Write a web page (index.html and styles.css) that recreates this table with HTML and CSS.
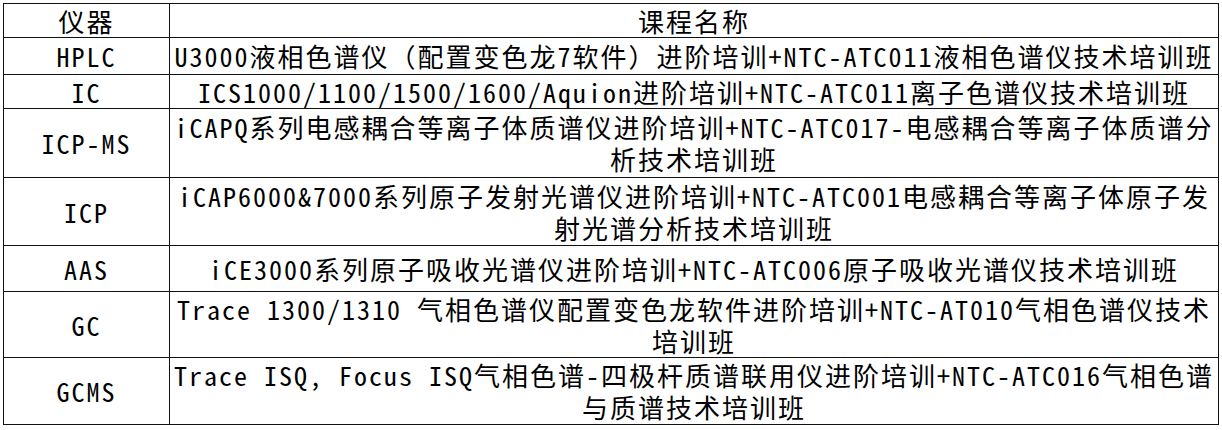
FILE: index.html
```html
<!DOCTYPE html>
<html lang="zh">
<head>
<meta charset="utf-8">
<title>课程表</title>
<link rel="stylesheet" href="styles.css">
</head>
<body>
<table class="course-table">
  <colgroup>
    <col class="col-inst">
    <col class="col-name">
  </colgroup>
  <tr class="r-head">
    <td class="inst">仪器</td>
    <td class="name">课程名称</td>
  </tr>
  <tr class="r-hplc">
    <td class="inst">HPLC</td>
    <td class="name">U3000液相色谱仪（配置变色龙7软件）进阶培训+NTC-ATC011液相色谱仪技术培训班</td>
  </tr>
  <tr class="r-ic">
    <td class="inst">IC</td>
    <td class="name">ICS1000/1100/1500/1600/Aquion进阶培训+NTC-ATC011离子色谱仪技术培训班</td>
  </tr>
  <tr class="r-icpms">
    <td class="inst">ICP-MS</td>
    <td class="name">iCAPQ系列电感耦合等离子体质谱仪进阶培训+NTC-ATC017-电感耦合等离子体质谱分<br>析技术培训班</td>
  </tr>
  <tr class="r-icp">
    <td class="inst">ICP</td>
    <td class="name">iCAP6000&amp;7000系列原子发射光谱仪进阶培训+NTC-ATC001电感耦合等离子体原子发<br>射光谱分析技术培训班</td>
  </tr>
  <tr class="r-aas">
    <td class="inst">AAS</td>
    <td class="name">iCE3000系列原子吸收光谱仪进阶培训+NTC-ATC006原子吸收光谱仪技术培训班</td>
  </tr>
  <tr class="r-gc">
    <td class="inst">GC</td>
    <td class="name">Trace 1300/1310 气相色谱仪配置变色龙软件进阶培训+NTC-AT010气相色谱仪技术<br>培训班</td>
  </tr>
  <tr class="r-gcms">
    <td class="inst">GCMS</td>
    <td class="name">Trace ISQ, Focus ISQ气相色谱-四极杆质谱联用仪进阶培训+NTC-ATC016气相色谱<br>与质谱技术培训班</td>
  </tr>
</table>
</body>
</html>
```

FILE: styles.css
```css
html, body {
  margin: 0;
  padding: 0;
  background: #ffffff;
}

body {
  padding: 3px 0 0 3px;
  font-family: "Noto Sans Mono CJK SC", "Noto Sans CJK SC", sans-serif;
  color: #000000;
}

.course-table {
  border-collapse: collapse;
  table-layout: fixed;
  width: 1215px;
}

.col-inst { width: 166px; }
.col-name { width: 1049px; }

.course-table td {
  border: 1px solid #111111;
  padding: 0 1px;
  text-align: center;
  vertical-align: middle;
  font-size: 26px;
  line-height: 32px;
  letter-spacing: 2px;
  white-space: nowrap;
}

.r-head  { height: 34px; }
.r-hplc  { height: 37px; }
.r-ic    { height: 34px; }
.r-icpms { height: 69px; }
.r-icp   { height: 68px; }
.r-aas   { height: 46px; }
.r-gc    { height: 66px; }
.r-gcms  { height: 67px; }
```
